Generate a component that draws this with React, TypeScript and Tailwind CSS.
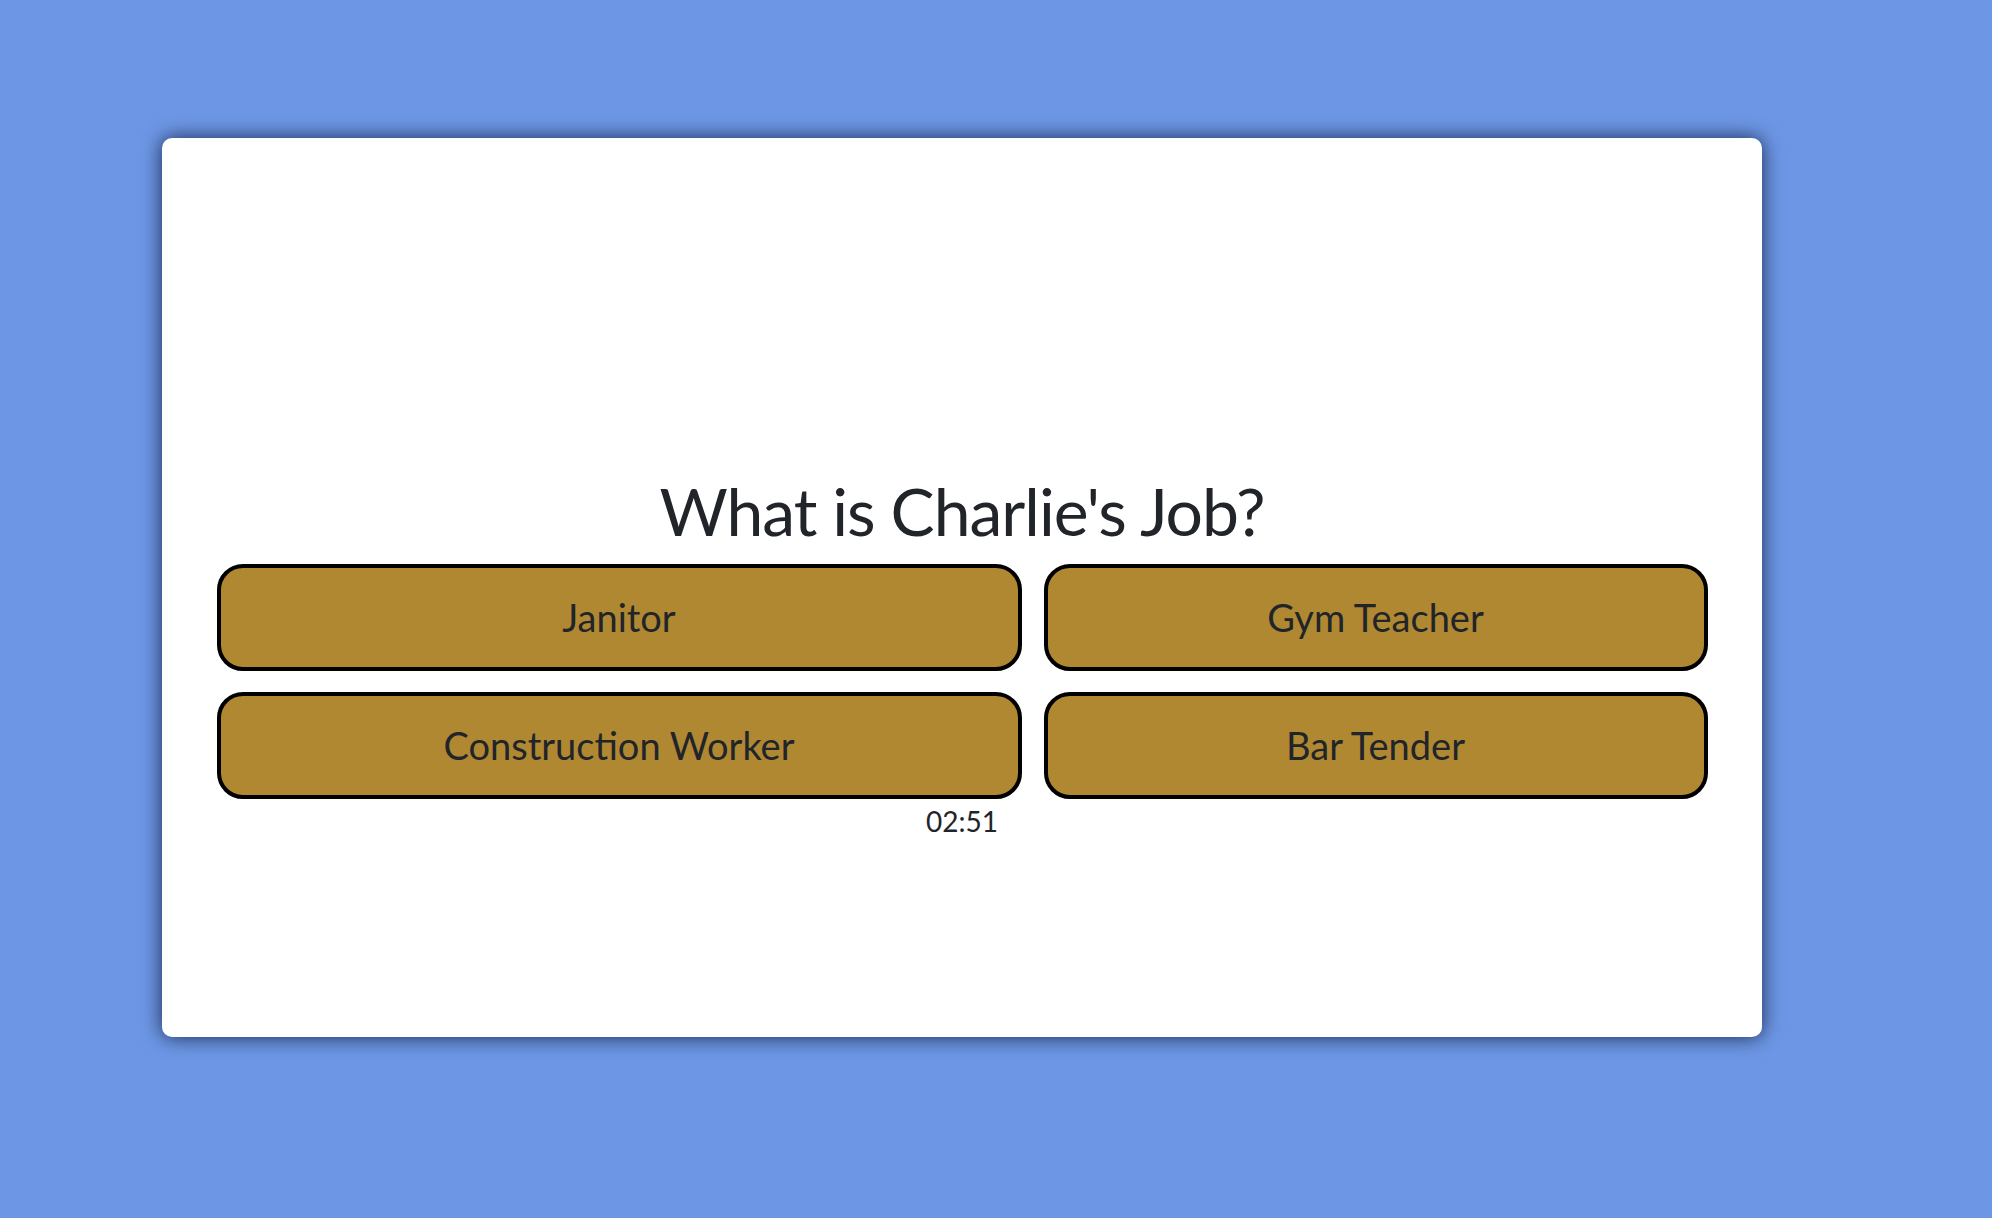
import React from 'react';

const ANSWERS = ['Janitor', 'Gym Teacher', 'Construction Worker', 'Bar Tender'];

export default function App() {
  return (
    <div className="min-h-[1218px] w-full bg-[#6d97e5] pl-[162px] pt-[138px] font-['Lato',sans-serif] text-[#212529]">
      {/* Quiz card */}
      <div className="flex h-[899px] w-[1600px] flex-col items-center rounded-[10px] bg-white px-[54px] pt-[340px] shadow-[0_0_20px_rgba(10,20,50,0.85)]">
        <h1 className="text-[66px] leading-none tracking-[-1px]">What is Charlie's Job?</h1>

        <div className="mt-[20px] grid grid-cols-[805px_664px] gap-x-[22px] gap-y-[21px]">
          {ANSWERS.map((a) => (
            <button
              key={a}
              className="flex h-[107px] items-center justify-center rounded-[26px] border-4 border-black bg-[#b08832] text-[38px] text-[#212529]"
            >
              {a}
            </button>
          ))}
        </div>

        <div className="mt-[8px] text-[28px] leading-none">02:51</div>
      </div>
    </div>
  );
}
